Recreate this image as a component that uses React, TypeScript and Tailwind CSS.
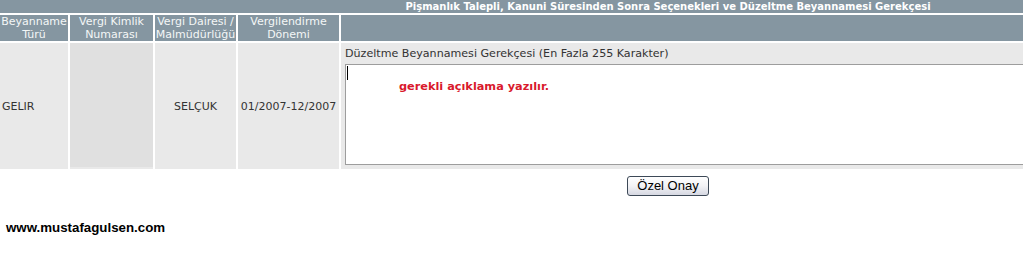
import React from "react";

const hdr = "bg-[#8596a1] text-[#f4f6f7] text-[11px] leading-[13px] text-center";
const cell = "bg-[#e9e9e9] text-[#333333] text-[11px] leading-[13px] flex items-center";

export default function App() {
  return (
    <div className="w-[1023px] h-[263px] overflow-hidden bg-white" style={{ fontFamily: '"DejaVu Sans", Verdana, sans-serif' }}>
      <div className="w-[1336px]">
        <div className="grid grid-cols-[68px_83px_81px_101px_995px] grid-rows-[13px_26px_126px] gap-[2px] bg-white">
          <div className="col-span-5 bg-[#8596a1] text-white font-bold text-[10px] leading-[13px] flex justify-center">
            Pişmanlık Talepli, Kanuni Süresinden Sonra Seçenekleri ve Düzeltme Beyannamesi Gerekçesi
          </div>
          <div className={hdr}>Beyanname<br />Türü</div>
          <div className={hdr}>Vergi Kimlik<br />Numarası</div>
          <div className={hdr + " whitespace-nowrap"}>Vergi Dairesi /<br />Malmüdürlüğü</div>
          <div className={hdr}>Vergilendirme<br />Dönemi</div>
          <div className={hdr}></div>

          <div className={cell + " pl-[2px]"}>GELIR</div>
          <div className="bg-[#e9e9e9] flex flex-col">
            <div className="h-[124px] bg-[#e0e0e0]"></div>
          </div>
          <div className={cell + " justify-center"}>SELÇUK</div>
          <div className={cell + " justify-center whitespace-nowrap"}>01/2007-12/2007</div>
          <div className="bg-[#e9e9e9] text-[#333333] text-[11.1px] leading-[13px] pl-[4px] pt-[4px]">
            <div>Düzeltme Beyannamesi Gerekçesi (En Fazla 255 Karakter)</div>
            <div className="mt-[4px] h-[101px] w-[940px] bg-white border border-[#9d9d9d] relative">
              <div className="absolute left-[1px] top-[1px] w-[1px] h-[14px] bg-black"></div>
              <div className="pl-[53px] pt-[15px] text-[#d9192c] font-bold text-[11.3px] leading-[14px]" style={{ fontFamily: '"DejaVu Sans", sans-serif' }}>
                gerekli açıklama yazılır.
              </div>
            </div>
          </div>
        </div>

        <div className="flex justify-center mt-[7px]">
          <button className="h-[20px] w-[82px] rounded-[3px] border border-[#3d4957] bg-gradient-to-b from-white via-[#f2f2f5] to-[#d6d8e2] text-black text-[13px] leading-[18px] flex items-center justify-center" style={{ fontFamily: '"Liberation Sans", Arial, sans-serif' }}>
            Özel Onay
          </button>
        </div>

        <div className="mt-[24px] pl-[6px] font-bold text-[13.3px] leading-[15px] text-black" style={{ fontFamily: '"Liberation Sans", Arial, sans-serif' }}>
          www.mustafagulsen.com
        </div>
      </div>
    </div>
  );
}
